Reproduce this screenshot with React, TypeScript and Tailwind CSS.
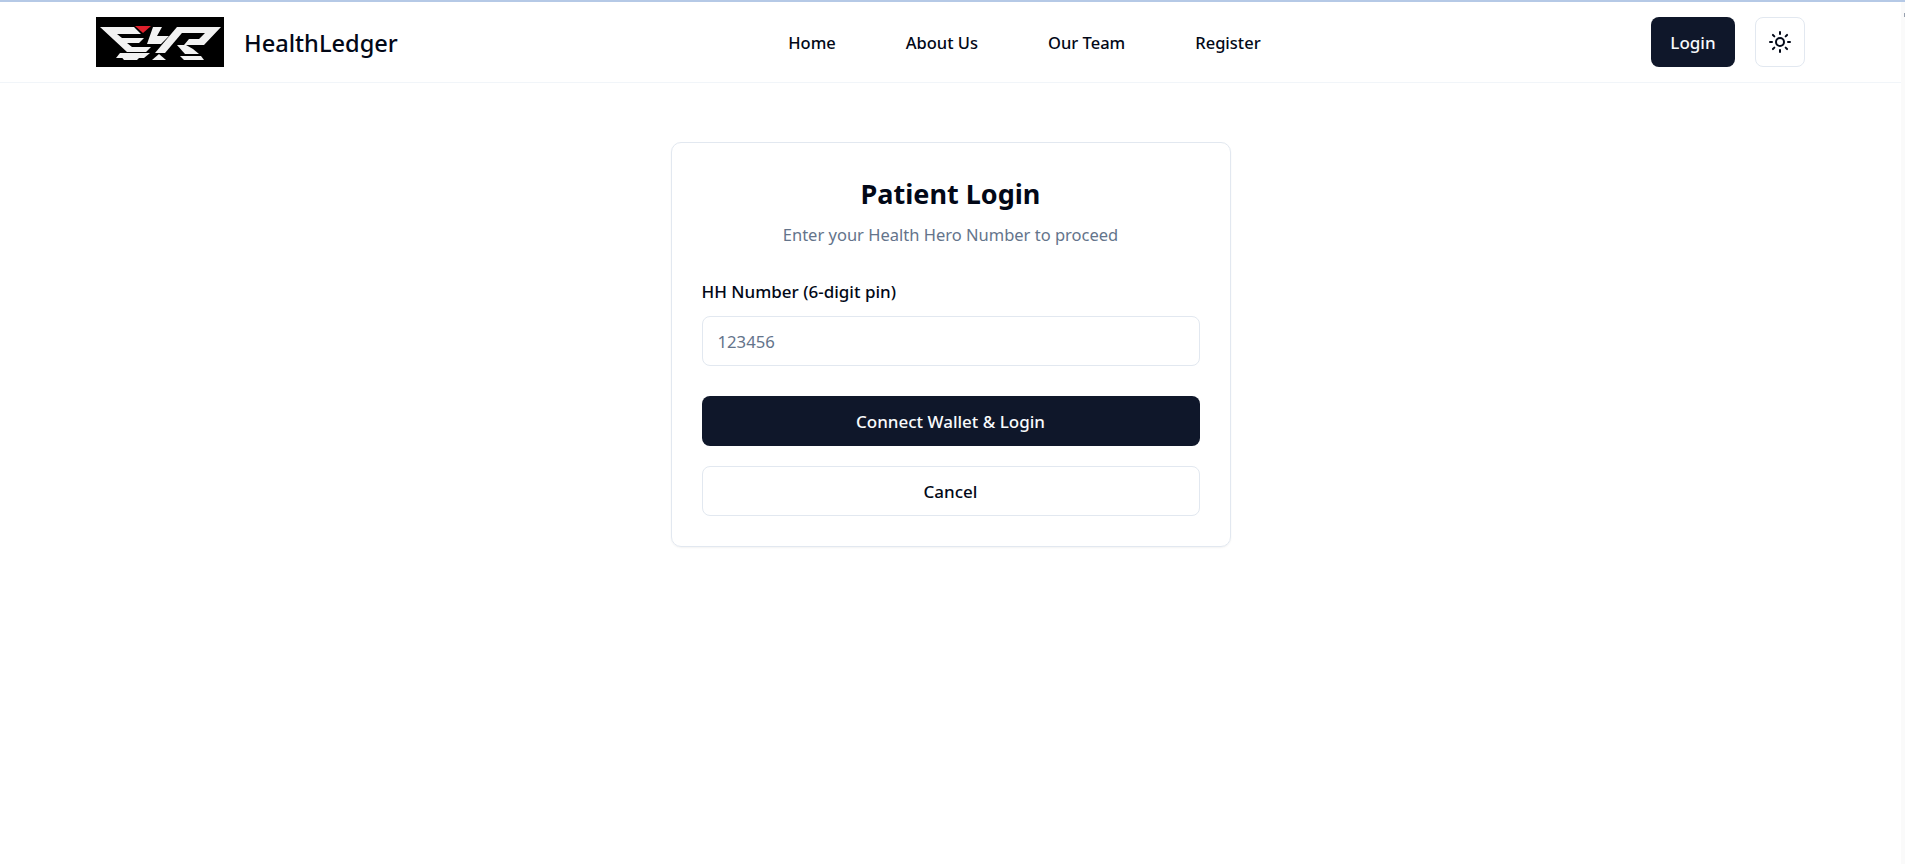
import { Sun } from "lucide-react";

const links = ["Home", "About Us", "Our Team", "Register"];

const Logo = () => (
  <svg viewBox="0 0 128 50" className="h-[50px] w-32 bg-black">
    <polygon points="39,9 55,9 47,16" fill="#e0202c" />
    {/* E wing */}
    <polygon points="4,10 38,10 45,17 21,17 26,21 48,21 43,26 31,26 36,30 55,30 50,35 31,35" fill="#f2f2f2" />
    <polygon points="24,36 54,36 48,41 24,41 20,41" fill="#f2f2f2" />
    {/* H */}
    <polygon points="57,10 66,10 61,19 73,19 65,27 51,27" fill="#f2f2f2" />
    <polygon points="81,10 91,10 69,36 59,36" fill="#f2f2f2" />
    {/* R */}
    <polygon points="88,10 125,10 108,28 88,28 93,22 103,22 109,16 83,16" fill="#f2f2f2" />
    <polygon points="81,28 90,28 97,32 103,37 89,37" fill="#f2f2f2" />
    {/* base row */}
    <polygon points="24,38 46,38 41,43 28,43" fill="#f2f2f2" />
    <polygon points="56,43 63,37 70,43" fill="#f2f2f2" />
    <polygon points="84,39 105,39 108,43 88,43" fill="#f2f2f2" />
  </svg>
);

export default function App() {
  return (
    <div className="flex min-h-screen border-t-2 border-t-[#b5c9e6] bg-white font-['Noto_Sans',sans-serif] text-[#020817]">
      <div className="min-w-0 flex-1">
        <nav className="flex h-[81px] items-center justify-between border-b border-b-[#f1f5f9] px-24">
          <div className="flex items-center gap-5">
            <Logo />
            <span className="pt-[4px] text-[23.6px] font-medium">HealthLedger</span>
          </div>
          <div className="flex items-center gap-[70px] pt-[3px] text-[16.5px] font-medium">
            {links.map((link) => (
              <a key={link} href="#">
                {link}
              </a>
            ))}
          </div>
          <div className="flex items-center gap-5">
            <button className="h-[50px] w-[84px] rounded-lg bg-[#0f172a] pt-[2px] text-[17px] font-medium text-[#f8fafc]">
              Login
            </button>
            <button className="flex h-[50px] w-[50px] items-center justify-center rounded-lg border border-[#e2e8f0] bg-white">
              <Sun size={24} />
            </button>
          </div>
        </nav>
        <main className="flex justify-center pt-[59px]">
          <div className="flex w-[560px] flex-col rounded-[10px] border border-[#e2e8f0] p-[30px] shadow-xs">
            <h1 className="text-center text-[27px] leading-[42px] font-bold">Patient Login</h1>
            <p className="mt-[7px] text-center text-[16.5px] leading-[25px] text-[#64748b]">
              Enter your Health Hero Number to proceed
            </p>
            <label className="mt-[33px] mb-3 text-[17px] leading-6 font-medium">HH Number (6-digit pin)</label>
            <input
              placeholder="123456"
              className="h-[50px] rounded-lg border border-[#e2e8f0] px-[15px] text-[16.7px] outline-none placeholder:text-[#64748b]"
            />
            <button className="mt-[30px] h-[50px] rounded-lg bg-[#0f172a] pt-px text-[17px] font-medium text-[#f8fafc]">
              Connect Wallet &amp; Login
            </button>
            <button className="mt-5 h-[50px] rounded-lg border border-[#e2e8f0] pt-px text-[17px] font-medium">
              Cancel
            </button>
          </div>
        </main>
      </div>
      {/* thin scrollbar strip on the right edge */}
      <div className="w-1 bg-[#fafafa]">
        <div className="mt-[11px] ml-auto h-1 w-px bg-gray-400" />
      </div>
    </div>
  );
}
